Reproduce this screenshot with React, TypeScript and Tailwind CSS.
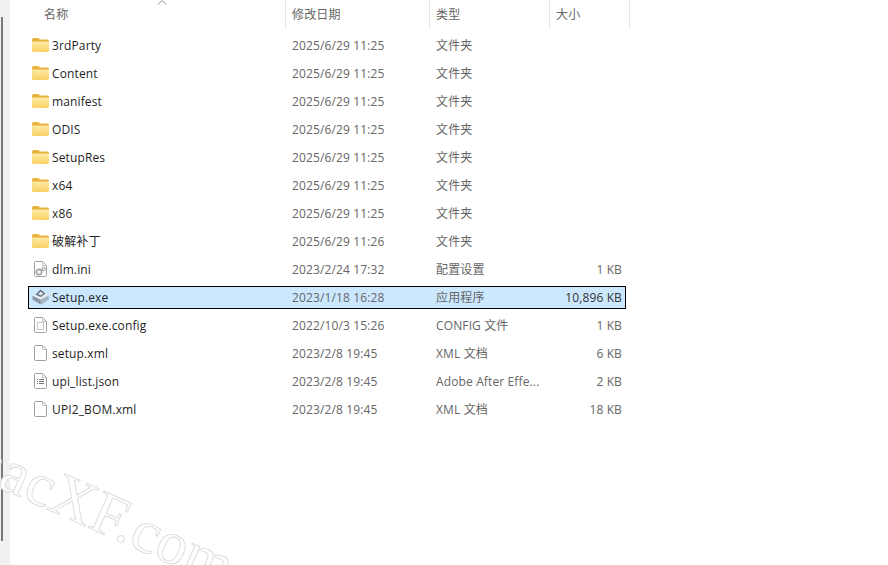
const files = [
  { name: "3rdParty", date: "2025/6/29 11:25", type: "文件夹", size: "", icon: "folder" },
  { name: "Content", date: "2025/6/29 11:25", type: "文件夹", size: "", icon: "folder" },
  { name: "manifest", date: "2025/6/29 11:25", type: "文件夹", size: "", icon: "folder" },
  { name: "ODIS", date: "2025/6/29 11:25", type: "文件夹", size: "", icon: "folder" },
  { name: "SetupRes", date: "2025/6/29 11:25", type: "文件夹", size: "", icon: "folder" },
  { name: "x64", date: "2025/6/29 11:25", type: "文件夹", size: "", icon: "folder" },
  { name: "x86", date: "2025/6/29 11:25", type: "文件夹", size: "", icon: "folder" },
  { name: "破解补丁", date: "2025/6/29 11:26", type: "文件夹", size: "", icon: "folder" },
  { name: "dlm.ini", date: "2023/2/24 17:32", type: "配置设置", size: "1 KB", icon: "ini" },
  { name: "Setup.exe", date: "2023/1/18 16:28", type: "应用程序", size: "10,896 KB", icon: "exe", selected: true },
  { name: "Setup.exe.config", date: "2022/10/3 15:26", type: "CONFIG 文件", size: "1 KB", icon: "config" },
  { name: "setup.xml", date: "2023/2/8 19:45", type: "XML 文档", size: "6 KB", icon: "blank" },
  { name: "upi_list.json", date: "2023/2/8 19:45", type: "Adobe After Effe...", size: "2 KB", icon: "json" },
  { name: "UPI2_BOM.xml", date: "2023/2/8 19:45", type: "XML 文档", size: "18 KB", icon: "blank" },
];

function FileIcon({ icon }: { icon: string }) {
  if (icon === "folder") {
    return (
      <svg width="17" height="14" viewBox="0 0 17 14">
        <defs>
          <linearGradient id="fold" x1="0" y1="0" x2="0" y2="1">
            <stop offset="0" stopColor="#ffeaa6" />
            <stop offset="1" stopColor="#f8d163" />
          </linearGradient>
        </defs>
        <path d="M0 2C0 .8.600 0 1.800 0h4.200l2 1.500h7.200c1.100 0 1.800.7 1.800 1.800V5H0z" fill="#e9b23a" />
        <path d="M0 3.500h17V12.300c0 1-.6 1.700-1.700 1.700H1.700C.6 14 0 13.300 0 12.300z" fill="url(#fold)" />
      </svg>
    );
  }
  if (icon === "exe") {
    return (
      <svg width="17" height="16" viewBox="0 0 17 16">
        <path d="M.5 6.500l8 4 8-4v4l-8 5-8-5z" fill="#8a97a6" />
        <path d="M8.500 10.500l8-4v4l-8 5z" fill="#a9b6c2" />
        <path d="M.5 6.500l4-3h8l4 3-8 4z" fill="#e4eaef" />
        <path d="M3.500 5.500l5-5 5 4-5 3.500z" fill="#5f7182" />
        <path d="M6 5l2.800-2.500L11.500 4.500 8.500 6.500z" fill="#dfe6ec" />
      </svg>
    );
  }
  return (
    <svg width="14" height="16" viewBox="0 0 14 16" fill="none">
      <path d="M.5 1.500c0-.6.4-1 1-1h7l4 4v10c0 .6-.4 1-1 1h-10c-.6 0-1-.4-1-1z" fill="#fff" stroke="#a0a0a0" />
      <path d="M8.500.5v4h4" stroke="#c0c0c0" />
      {icon === "config" && <rect x="3.500" y="5.500" width="6" height="7" stroke="#c4c4c4" />}
      {icon === "json" && <path d="M3 6.500h1M5 6.500h5M3 8.500h1M5 8.500h5M3 10.500h1M5 10.500h5" stroke="#777" />}
      {icon === "ini" && (
        <>
          <circle cx="5" cy="11" r="3" fill="#d4d4d4" stroke="#8a8a8a" />
          <circle cx="5" cy="11" r="1" fill="#fff" />
          <circle cx="9.500" cy="8" r="1.800" fill="#e2e2e2" stroke="#a5a5a5" />
        </>
      )}
    </svg>
  );
}

export default function App() {
  return (
    <div className="relative h-[565px] w-[888px] overflow-hidden bg-white font-['Open_Sans','Noto_Sans_CJK_SC',sans-serif] text-xs tracking-[0.13px] text-[#666]">
      <div className="absolute left-0 top-0 h-full w-[10px] bg-[#f1f1f1]">
        <div className="ml-[1px] mt-[17px] h-[524px] w-[2px] bg-[#777]" />
      </div>
      <div className="ml-[10px]">
        <div className="relative flex h-[28px] items-center">
          <svg className="absolute left-[147px] top-0" width="10" height="5" viewBox="0 0 10 5" fill="none">
            <path d="M1 4.500L5 .5l4 4" stroke="#8a8a8a" />
          </svg>
          <div className="flex h-full w-[275px] items-center pl-[34px] pt-[2px]">名称</div>
          <div className="flex h-full w-[144px] items-center border-l border-[#e5e5e5] pl-[6px] pt-[2px]">修改日期</div>
          <div className="flex h-full w-[120px] items-center border-l border-[#e5e5e5] pl-[6px] pt-[2px]">类型</div>
          <div className="flex h-full w-[81px] items-center border-x border-[#e5e5e5] pl-[6px] pt-[2px]">大小</div>
        </div>
        <div className="pt-[3px]">
          {files.map((f) => (
            <div key={f.name} className="flex h-[28px] items-center">
              <div
                className={
                  "ml-[18px] flex h-[23px] w-[598px] items-center border " +
                  (f.selected ? "border-black bg-[#cce8ff]" : "border-transparent")
                }
              >
                <div className="flex w-[20px] shrink-0 items-center justify-center pl-[3px]">
                  <FileIcon icon={f.icon} />
                </div>
                <div className="w-[243px] pl-[3px] pt-[2px] text-[#1f1f1f]">{f.name}</div>
                <div className="w-[144px] pt-[2px]">{f.date}</div>
                <div className="w-[107px] pt-[2px]">{f.type}</div>
                <div className={"w-[79px] pt-[2px] text-right " + (f.selected ? "text-[#333]" : "")}>{f.size}</div>
              </div>
            </div>
          ))}
        </div>
      </div>
      <div className="pointer-events-none absolute left-[-39px] top-[418px] origin-left rotate-[24deg] font-['Liberation_Serif',serif] text-[61px] leading-none text-white [-webkit-text-stroke:1px_#dedede]">
        macXF.com
      </div>
    </div>
  );
}
